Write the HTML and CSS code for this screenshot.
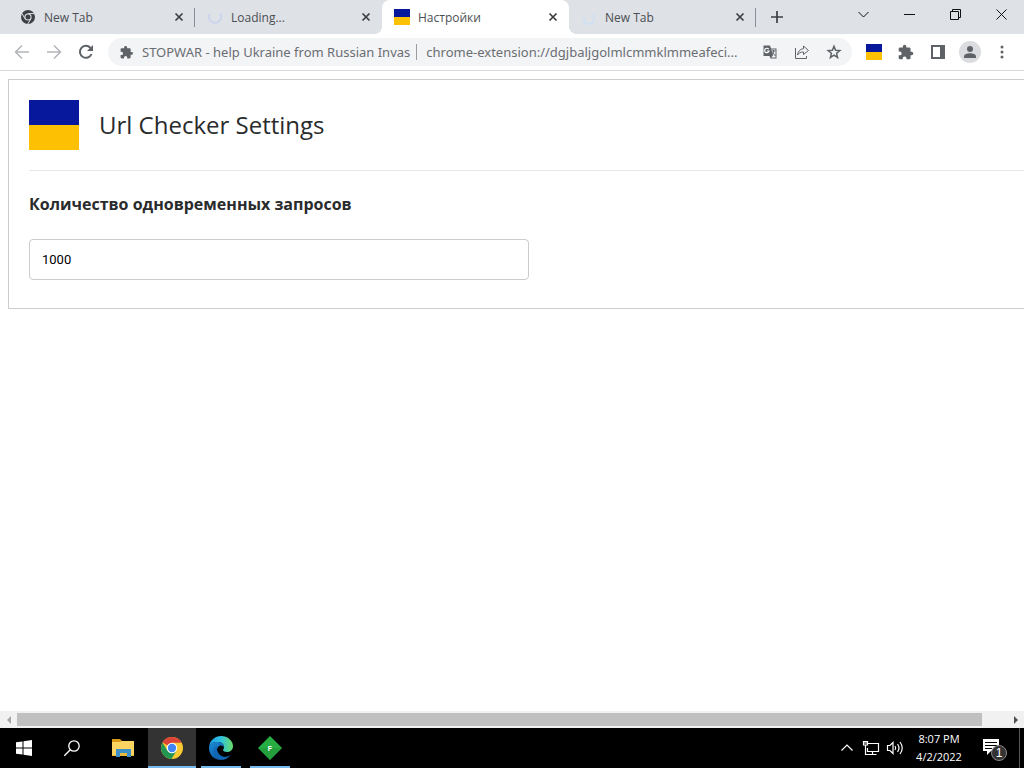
FILE: index.html
```html
<!DOCTYPE html>
<html lang="ru">
<head>
<meta charset="utf-8">
<title>Настройки</title>
<link rel="stylesheet" href="styles.css">
</head>
<body>
<div class="screen">
  <header class="tabstrip">
    <div class="tabs">
      <div class="tab">
        <svg class="favicon" viewBox="0 0 16 16"><circle cx="8" cy="8" r="7" fill="#3c4043"/><path d="M8 4.600H14.600M5 9.700L1.800 4.200M11 9.700L7.700 15" stroke="#dee1e6" stroke-width="1"/><circle cx="8" cy="8" r="3.600" fill="#dee1e6"/><circle cx="8" cy="8" r="2.500" fill="#3c4043"/></svg>
        <span class="tab-title">New Tab</span>
        <button class="tab-close" aria-label="Close"><svg viewBox="0 0 10 10"><path d="M1.500 1.500l7 7M8.500 1.500l-7 7"/></svg></button>
      </div>
      <div class="tab">
        <svg class="favicon" viewBox="0 0 16 16"><path class="spinner" d="M2 5v3a6 6 0 0 0 12 0V4"/></svg>
        <span class="tab-title">Loading...</span>
        <button class="tab-close" aria-label="Close"><svg viewBox="0 0 10 10"><path d="M1.500 1.500l7 7M8.500 1.500l-7 7"/></svg></button>
      </div>
      <div class="tab active">
        <span class="flag favicon"></span>
        <span class="tab-title">Настройки</span>
        <button class="tab-close" aria-label="Close"><svg viewBox="0 0 10 10"><path d="M1.500 1.500l7 7M8.500 1.500l-7 7"/></svg></button>
      </div>
      <div class="tab">
        <svg class="favicon" viewBox="0 0 16 16"><path class="spinner faint" d="M3 8v2a5 5 0 0 0 10 0V5"/></svg>
        <span class="tab-title">New Tab</span>
        <button class="tab-close" aria-label="Close"><svg viewBox="0 0 10 10"><path d="M1.500 1.500l7 7M8.500 1.500l-7 7"/></svg></button>
      </div>
      <button class="new-tab" aria-label="New tab"><svg viewBox="0 0 12 12"><path d="M6 0v12M0 6h12"/></svg></button>
    </div>
    <div class="window-buttons">
      <button aria-label="Search tabs"><svg viewBox="0 0 11 11"><path d="M.5 3l5 5 5-5"/></svg></button>
      <button aria-label="Minimize"><svg viewBox="0 0 11 11"><path d="M0 5.500h11"/></svg></button>
      <button aria-label="Restore"><svg viewBox="0 0 11 11"><path d="M.5 2.500h8v8h-8zM2.500 2.500v-2h8v8h-2"/></svg></button>
      <button aria-label="Close window"><svg viewBox="0 0 11 11"><path d="M.5.5l10 10M10.500.5l-10 10"/></svg></button>
    </div>
  </header>

  <nav class="toolbar">
    <button class="tool dim" aria-label="Back"><svg viewBox="0 0 16 16"><path class="line" d="M15 8H2M8 1.500L1.500 8 8 14.500"/></svg></button>
    <button class="tool dim" aria-label="Forward"><svg viewBox="0 0 16 16"><path class="line" d="M1 8h13M8 1.500L14.500 8 8 14.500"/></svg></button>
    <button class="tool" aria-label="Reload"><svg viewBox="0 0 16 16"><path class="line heavy" d="M13.500 10A6 6 0 1 1 12.300 3.700L14 5.500"/><path d="M15 1v6H9z"/></svg></button>
    <div class="omnibox">
      <svg class="site-icon" viewBox="1 1 22 22"><path d="M20.500 11H19V7c0-1.100-.9-2-2-2h-4V3.500a2.500 2.500 0 0 0-5 0V5H4c-1.100 0-2 .9-2 2v3.800h1.500a2.700 2.700 0 0 1 0 5.400H2V20c0 1.100.9 2 2 2h3.800v-1.500a2.700 2.700 0 0 1 5.400 0V22H17c1.100 0 2-.9 2-2v-4h1.500a2.500 2.500 0 0 0 0-5z"/></svg>
      <span class="site-name">STOPWAR - help Ukraine from Russian Invas</span>
      <span class="divider"></span>
      <span class="address">chrome-extension://dgjbaljgolmlcmmklmmeafeci...</span>
      <button class="tool" aria-label="Translate"><svg viewBox="0 0 16 16"><path d="M1.500 1.500H8l1 3h5.500v10H8.500L7.500 12h-6z" fill="#5f6368"/><path d="M9.300 5.500h4.200v8H9.200L11 11.500z" fill="#f1f3f4"/><path d="M9.500 7h4M11.500 6v1c0 2-.7 3-1.700 4M10.500 8.500l3 3.500" fill="none" stroke="#5f6368"/><path d="M6.700 5.200A2.200 2.200 0 1 0 7 7H5" fill="none" stroke="#fff" stroke-width="1.200"/></svg></button>
      <button class="tool" aria-label="Share"><svg viewBox="0 0 16 16"><path class="thin" d="M1.500 4v10.500h11V12M9.500 2l5 4.500-5 4V8C6.500 8 4.800 9 3.500 11c.4-3.500 2.500-6 6-6.300z"/></svg></button>
      <button class="tool" aria-label="Bookmark"><svg viewBox="0 0 16 16"><path class="line" d="M8 2.200l1.600 4 4.300.3-3.300 2.800 1 4.200L8 11.200l-3.600 2.300 1-4.200-3.300-2.800 4.300-.3z"/></svg></button>
    </div>
    <button class="tool" aria-label="Url Checker"><span class="flag small"></span></button>
    <button class="tool" aria-label="Extensions"><svg viewBox="1 0 23 23"><path d="M20.500 11H19V7c0-1.100-.9-2-2-2h-4V3.500a2.500 2.500 0 0 0-5 0V5H4c-1.100 0-2 .9-2 2v3.800h1.500a2.700 2.700 0 0 1 0 5.400H2V20c0 1.100.9 2 2 2h3.800v-1.500a2.700 2.700 0 0 1 5.400 0V22H17c1.100 0 2-.9 2-2v-4h1.500a2.500 2.500 0 0 0 0-5z"/></svg></button>
    <button class="tool" aria-label="Side panel"><svg viewBox="0 0 16 16"><path fill-rule="evenodd" d="M1 1h14v14H1zM3 3v10h7V3z"/></svg></button>
    <button class="tool" aria-label="Profile"><svg class="avatar" viewBox="0 0 22 22"><circle cx="11" cy="11" r="11" fill="#dadce0"/><circle cx="11" cy="8" r="3"/><path d="M5 17v-1.500C5 13.500 8 12.300 11 12.300s6 1.200 6 3.200V17z"/></svg></button>
    <button class="tool" aria-label="Menu"><svg viewBox="0 0 16 16"><circle cx="8" cy="3" r="1.500"/><circle cx="8" cy="8" r="1.500"/><circle cx="8" cy="13" r="1.500"/></svg></button>
  </nav>

  <main class="page">
    <section class="panel">
      <div class="panel-head">
        <span class="flag logo"></span>
        <h1>Url Checker Settings</h1>
      </div>
      <label for="requests">Количество одновременных запросов</label>
      <input id="requests" type="text" value="1000">
    </section>
  </main>

  <div class="scrollbar">
    <button aria-label="Scroll left"><svg viewBox="0 0 8 8"><path d="M6 0v8L2 4z" fill="#a3a3a3"/></svg></button>
    <div class="track"><div class="thumb"></div></div>
    <button aria-label="Scroll right"><svg viewBox="0 0 8 8"><path d="M2 0v8l4-4z" fill="#505050"/></svg></button>
  </div>

  <footer class="taskbar">
    <button class="task" aria-label="Start"><svg viewBox="0 0 16 16"><path fill="#fff" d="M0 2.300L6.500 1.400V7.500H0zM7.500 1.200L16 0v7.500H7.500zM0 8.500h6.500v6.100L0 13.700zM7.500 8.500H16V16l-8.500-1.200z"/></svg></button>
    <button class="task" aria-label="Search"><svg viewBox="0 0 16 16"><g fill="none" stroke="#fff" stroke-width="1.300"><circle cx="10" cy="6" r="5.200"/><path d="M6.300 9.700L.3 15.700"/></g></svg></button>
    <div class="apps">
      <button class="task" aria-label="File Explorer"><svg class="app" viewBox="0 0 24 24"><path fill="#d99b16" d="M1 3h8l2 2h10v3H1z"/><path fill="#fcd462" d="M1 6h8l2-1h12v15H1z"/><path fill="#3f8fc8" d="M5 13h15v8h-4v-4H9v4H5z"/><path fill="#e9b93c" d="M1 19h4v1H1zM20 19h3v1h-3zM9 17h7v3H9z"/></svg></button>
      <button class="task current" aria-label="Google Chrome"><svg class="app" viewBox="0 0 24 24"><circle cx="12" cy="12" r="11" fill="#fbc932"/><path fill="#db4437" d="M12 12L2.500 6.400A11 11 0 0 1 21.600 6.700H12z"/><path fill="#219653" d="M2.500 6.500A11 11 0 0 0 11.500 23l5-8.300L12 12l-4.600 2.700z"/><circle cx="12" cy="12" r="5.300" fill="#fff"/><circle cx="12" cy="12" r="4.200" fill="#4285f4"/></svg></button>
      <button class="task running" aria-label="Microsoft Edge"><svg class="app" viewBox="0 0 24 24"><defs><linearGradient id="edgeTop"><stop offset="0" stop-color="#1b9de2"/><stop offset=".5" stop-color="#2fc1df"/><stop offset="1" stop-color="#6bdc65"/></linearGradient><linearGradient id="edgeLow" x2="1" y2="1"><stop offset="0" stop-color="#1b8fdb"/><stop offset="1" stop-color="#0b3f8a"/></linearGradient></defs><path fill="url(#edgeTop)" d="M0 11C1 4 6 0 12 0c7 0 12 5 12 10 0 4-3 6-6 6-2 0-4-1-4-2s1-1 1-3c0-3-3-5-6-5C4 6 1 8 0 11z"/><path fill="url(#edgeLow)" d="M0 12C0 8 4 6 8 6c4 0 7 2 7 5-1-1-2-1.500-3-1.500-2 0-4 2-4 4.500 0 4 4 7 8 7 2 0 4-1 5.500-2C19 22 16 24 12 24 5 24 0 19 0 12z"/><path fill="#1267b5" d="M8 10c-2 1-3 3-3 5 0 5 4 8.500 8 8.500 3 0 6-1.500 8.500-4.500-1.500 1-3.500 2-5.500 2-5 0-9-5-8-11z"/></svg></button>
      <button class="task running" aria-label="F"><svg class="app" viewBox="0 0 24 24"><path fill="#27ae42" d="M12 0l12 12-12 12L0 12z"/><path fill="#1f8f38" d="M0 12h24L12 24z" opacity=".5"/><text class="app-letter" x="12" y="15" text-anchor="middle">F</text></svg></button>
    </div>
    <div class="tray">
      <button aria-label="Show hidden icons"><svg viewBox="0 0 16 16"><path class="tray-line" d="M2.500 10.500L8 5l5.500 5.500"/></svg></button>
      <button aria-label="Network"><svg viewBox="0 0 16 16"><path class="tray-line" d="M5 3.500h10.500v8H4.500V8M9.500 11.500v3M6 14.500h7.500M.5 1.500h4v3.500h-4zM2.500 5v9.500H6M.5 3h4"/></svg></button>
      <button aria-label="Volume"><svg viewBox="0 0 16 16"><path class="tray-line" d="M.5 5.500h2.500l3-3v11l-3-3H.5zM8 6q1.500 2 0 4M10.500 4q3 4 0 8M13 2q4.500 6 0 12"/></svg></button>
    </div>
    <div class="clock"><time>8:07 PM</time><time>4/2/2022</time></div>
    <button class="notify" aria-label="Notifications"><svg viewBox="0 0 24 24"><path fill="#fff" d="M0 3h16v12H8l-4 4v-4H0z"/><path stroke="#000" d="M2 6.500h12M2 9.500h12M2 12.500h7"/><circle cx="16" cy="17" r="7.500" fill="#333" stroke="#888"/><text class="badge" x="16" y="21" text-anchor="middle">1</text></svg></button>
    <button class="show-desktop" aria-label="Show desktop"></button>
  </footer>
</div>
</body>
</html>
```
FILE: styles.css
```css
* { box-sizing: border-box; }

body {
  margin: 0;
  background: #fff;
  color: #292b2c;
  font-family: "Open Sans", "Noto Sans", sans-serif;
}

button {
  border: 0;
  margin: 0;
  padding: 0;
  background: none;
  display: flex;
  align-items: center;
  justify-content: center;
  flex: none;
}

svg { display: block; flex: none; overflow: visible; }

.screen {
  display: flex;
  flex-direction: column;
  height: 100vh;
  overflow: hidden;
}

.flag {
  flex: none;
  background: linear-gradient(#08189c 50%, #fdc003 50%);
}
.flag.small { width: 16px; height: 16px; }
.flag.logo { width: 50px; height: 50px; }

/* Tab strip */
.tabstrip {
  display: flex;
  flex: none;
  height: 34px;
  background: #dee1e6;
}
.tabs {
  display: flex;
  flex: 1;
  min-width: 0;
  padding-left: 8px;
}
.tab {
  display: flex;
  align-items: center;
  flex: 0 1 187px;
  min-width: 0;
  padding: 0 10px 0 12px;
  position: relative;
}
.tab:not(.active)::after {
  content: "";
  position: absolute;
  right: 0;
  top: 8px;
  width: 1px;
  height: 19px;
  background: #8a8d93;
}
.tab:has(+ .active)::after { display: none; }
.tab.active {
  background: #fff;
  border-radius: 8px 8px 0 0;
}
.tab.active::before,
.tab.active::after {
  content: "";
  position: absolute;
  bottom: 0;
  width: 8px;
  height: 8px;
}
.tab.active::before {
  left: -8px;
  background: radial-gradient(circle at 0 0, #dee1e6 8px, #fff 8px);
}
.tab.active::after {
  right: -8px;
  background: radial-gradient(circle at 100% 0, #dee1e6 8px, #fff 8px);
}
.favicon { width: 16px; height: 16px; margin-right: 8px; }
.spinner { fill: none; stroke: #ccd5ee; stroke-width: 2; }
.spinner.faint { stroke: #d0e0f4; }
.tab-title {
  flex: 1;
  min-width: 0;
  overflow: hidden;
  white-space: nowrap;
  font-size: 12px;
  color: #4b4f53;
}
.tab-close { width: 12px; height: 16px; }
.tab-close svg { width: 10px; height: 10px; }
.tab-close path, .new-tab path {
  fill: none;
  stroke: #3c4043;
  stroke-width: 1.700;
}
.new-tab { width: 42px; }
.new-tab svg { width: 12px; height: 12px; }
.window-buttons { display: flex; flex: none; height: 28px; }
.window-buttons button { width: 46px; }
.window-buttons svg { width: 11px; height: 11px; }
.window-buttons path { fill: none; stroke: #111; }

/* Toolbar */
.toolbar {
  display: flex;
  align-items: center;
  flex: none;
  height: 37px;
  padding: 0 6px;
  border-bottom: 1px solid #d8dadd;
}
.tool { width: 32px; height: 28px; }
.tool svg { width: 16px; height: 16px; fill: #5f6368; }
.tool svg.avatar { width: 22px; height: 22px; }
.tool .line { fill: none; stroke: #5f6368; stroke-width: 1.500; }
.tool .heavy { stroke-width: 2; }
.tool .thin { fill: none; stroke: #5f6368; stroke-width: 1; }
.dim .line { stroke: #b3b5b8; }
.omnibox {
  display: flex;
  align-items: center;
  flex: 1;
  min-width: 0;
  height: 28px;
  margin: 0 6px;
  padding: 0 2px 0 12px;
  border-radius: 14px;
  background: #f3f4f6;
  color: #6a6e73;
  font-family: "Noto Sans", "Open Sans", sans-serif;
  font-size: 13px;
  white-space: nowrap;
}
.site-icon { width: 13px; height: 13px; margin-right: 9px; fill: #5f6368; }
.site-name { flex: none; }
.divider {
  flex: none;
  width: 1px;
  height: 16px;
  margin: 0 9px 0 6px;
  background: #9a9da1;
}
.address {
  flex: 1;
  min-width: 0;
}

/* Settings page */
.page {
  flex: 1;
  min-height: 0;
  padding: 8px;
  overflow: hidden;
}
.panel {
  min-width: 1062px;
  padding: 20px 20px 28px;
  border: 1px solid #ccc;
}
.panel-head {
  display: flex;
  align-items: center;
  gap: 20px;
  padding-bottom: 20px;
  border-bottom: 1px solid #e6e6e6;
}
h1 {
  margin: 0;
  font-size: 24px;
  font-weight: 400;
  line-height: 30px;
}
.panel label {
  display: block;
  margin: 20px 0 22px;
  font-size: 16px;
  font-weight: 700;
  line-height: 26px;
}
.panel input {
  display: block;
  width: 500px;
  height: 41px;
  padding: 0 12px;
  border: 1px solid #ccc;
  border-radius: 4px;
  background: #fff;
  color: #000;
  font-family: Roboto, "Noto Sans", sans-serif;
  font-size: 13px;
}

/* Horizontal scrollbar */
.scrollbar {
  display: flex;
  align-items: stretch;
  flex: none;
  height: 17px;
  background: #f1f1f1;
}
.scrollbar button { width: 17px; }
.scrollbar svg { width: 8px; height: 8px; }
.track { flex: 1; padding: 2px 0; }
.thumb { width: 97.500%; height: 13px; background: #c0c0c0; }

/* Taskbar */
.taskbar {
  display: flex;
  flex: none;
  height: 40px;
  background: #000;
  color: #fff;
}
.task { width: 48px; height: 40px; }
.task svg { width: 16px; height: 16px; }
.task svg.app { width: 24px; height: 24px; }
.apps { display: flex; flex: 1; gap: 1px; padding-left: 3px; }
.current {
  background: #333;
  box-shadow: inset 0 -2px #76b9ed;
}
.running {
  background: linear-gradient(#76b9ed, #76b9ed) center bottom / 40px 2px no-repeat;
}
.app-letter { fill: #fff; font-size: 7px; font-weight: 700; }
.tray { display: flex; flex: none; }
.tray button { width: 24px; }
.tray svg { width: 16px; height: 16px; }
.tray-line { fill: none; stroke: #fff; stroke-width: 1.200; }
.clock {
  display: flex;
  flex-direction: column;
  justify-content: center;
  align-items: center;
  flex: none;
  width: 64px;
  font-size: 11px;
  line-height: 18px;
  white-space: nowrap;
}
.notify { width: 48px; }
.notify svg { width: 24px; height: 24px; }
.badge { fill: #fff; font-size: 12px; }
.show-desktop { width: 5px; border-left: 1px solid #555; }
```
